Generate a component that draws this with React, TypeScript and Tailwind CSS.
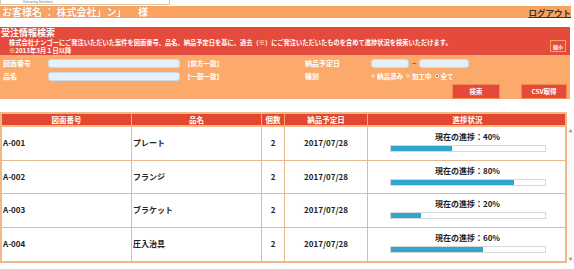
import React from 'react';

const rows = [
  { no: 'A-001', name: 'プレート', qty: 2, date: '2017/07/28', pct: 40 },
  { no: 'A-002', name: 'フランジ', qty: 2, date: '2017/07/28', pct: 80 },
  { no: 'A-003', name: 'ブラケット', qty: 2, date: '2017/07/28', pct: 20 },
  { no: 'A-004', name: '圧入治具', qty: 2, date: '2017/07/28', pct: 60 },
];

const cols = 'grid grid-cols-[130px_130px_23px_83px_199px]';

export default function App() {
  return (
    <div className="w-[574px] h-[269px] overflow-hidden bg-white text-[#222] font-['Noto_Sans_CJK_JP',sans-serif] font-bold leading-none">
      {/* logo strip */}
      <div className="h-[6px]">
        <div className="w-[170px] h-[5px] border border-t-0 border-[#d9c8a6] overflow-hidden flex items-end">
          <span className="block text-[3px] leading-[3px] text-[#9aa3b5] pl-[22px]">Delivering Solutions</span>
        </div>
      </div>

      {/* customer bar */}
      <div className="w-[571px] h-[12px] bg-[#f9a462] flex items-center justify-between pl-[2px]">
        <span className="text-[10px] text-white [text-shadow:0_0_1px_#d9773a] whitespace-pre">お客様名 ： 株式会社」ン」     様</span>
        <a href="#" className="text-[8.5px] text-[#333] underline">ログアウト</a>
      </div>

      <div className="h-[9px]" />

      {/* search panel */}
      <div className="w-[570px] bg-[#e54b3c] h-[28px] flex text-white">
        <div className="flex-1">
          <h2 className="text-[9px] pt-[1px] pl-[1px]">受注情報検索</h2>
          <p className="text-[6.25px] pl-[9px] mt-[3px]">
            株式会社ナンゴーにご発注いただいた案件を図面番号、品名、納品予定日を基に、過去（※）にご発注いただいたものを含めて進捗状況を検索いただけます。
          </p>
          <p className="text-[6.25px] pl-[9px] mt-[2px]">※2013年3月１日以降</p>
        </div>
        <div className="flex items-start pr-[4px] pt-[13px]">
          <button className="w-[16px] h-[12px] p-0 flex items-center justify-center border border-[#f7a060] text-[5px] text-white">縮小</button>
        </div>
      </div>

      <div className="w-[570px] h-[44px] bg-[#fcaa6b] text-white text-[7px] pt-[3px]">
        <div className="flex items-center h-[10px]">
          <span className="w-[48px] pl-[3px]">図面番号</span>
          <div className="w-[132px] h-[9px] rounded-[3px] border border-[#c9d9ea] bg-[#e4f0fb]" />
          <span className="w-[124px] pl-[4px] text-[6.5px]">【前方一致】</span>
          <span className="w-[67px] pl-[1px]">納品予定日</span>
          <div className="w-[38px] h-[9px] rounded-[3px] border border-[#c9d9ea] bg-[#e4f0fb]" />
          <span className="w-[10px] text-center text-[#555]">~</span>
          <div className="w-[50px] h-[9px] rounded-[3px] border border-[#c9d9ea] bg-[#e4f0fb]" />
        </div>
        <div className="flex items-center h-[10px] mt-[3px]">
          <span className="w-[48px] pl-[3px]">品名</span>
          <div className="w-[132px] h-[9px] rounded-[3px] border border-[#c9d9ea] bg-[#e4f0fb]" />
          <span className="w-[124px] pl-[4px] text-[6.5px]">【一部一致】</span>
          <span className="w-[67px] pl-[1px]">種別</span>
          <div className="flex items-center gap-[3px] text-[6.5px]">
            {['納品済み', '加工中', '全て'].map((t, i) => (
              <span key={t} className="flex items-center gap-[2px]">
                <span className={`w-[4px] h-[4px] rounded-full ${i === 2 ? 'bg-[#555] border border-white' : 'bg-[#f3d0b3]'}`} />
                {t}
              </span>
            ))}
          </div>
        </div>
        <div className="flex justify-end gap-[23px] pr-[4px] mt-[4px]">
          <button className="w-[46px] h-[13px] bg-[#e4493a] text-white text-[6.5px] shadow-[0_0_0_1px_#f08a52]">検索</button>
          <button className="w-[44px] h-[13px] bg-[#e4493a] text-white text-[6.5px] shadow-[0_0_0_1px_#f08a52]">CSV取得</button>
        </div>
      </div>

      <div className="h-[13px]" />

      {/* result table */}
      <div className="flex">
        <div className="w-[567px] border-2 border-[#eeba8a]">
          <div className={`${cols} h-[13px] bg-[#e4472f] text-white text-[7.5px] border-b-2 border-[#fbb98a]`}>
            {['図面番号', '品名', '個数', '納品予定日', '進捗状況'].map((h, i) => (
              <div key={h} className={`flex items-center justify-center ${i < 4 ? 'border-r border-[#f7a86c]' : ''}`}>
                {h}
              </div>
            ))}
          </div>
          {rows.map((r, i) => (
            <div key={r.no} className={`${cols} h-[33.5px] text-[8px] ${i < 3 ? 'border-b border-[#e7b98e]' : ''}`}>
              <div className="flex items-center pl-[1px] border-r border-[#e7b98e]">{r.no}</div>
              <div className="flex items-center pl-[1px] border-r border-[#e7b98e]">{r.name}</div>
              <div className="flex items-center justify-center border-r border-[#e7b98e]">{r.qty}</div>
              <div className="flex items-center justify-center border-r border-[#e7b98e]">{r.date}</div>
              <div className="flex flex-col items-center pt-[6px]">
                <span className="text-[8px]">現在の進捗：{r.pct}%</span>
                <div className="mt-[4px] w-[156px] h-[7px] border border-[#d8d8d8] bg-white">
                  <div className="h-full bg-[#30a6cf]" style={{ width: `${r.pct}%` }} />
                </div>
              </div>
            </div>
          ))}
        </div>
        {/* scrollbar */}
        <div className="w-[7px] mt-[15px] h-[136px] bg-[#fafafa] flex flex-col justify-between items-center text-[#999] text-[4px] py-[2px]">
          <span>▲</span>
          <span>▼</span>
        </div>
      </div>
    </div>
  );
}
